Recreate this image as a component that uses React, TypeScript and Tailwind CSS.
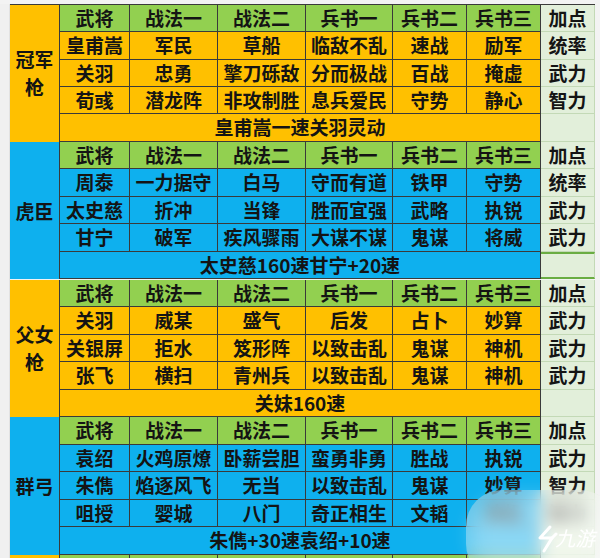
import React from 'react';

type Group = {
  label: string[];
  tone: 'gold' | 'blue';
  rows: string[][];
  summary: string;
  accentSummary?: boolean;
};

const headers = ['武将', '战法一', '战法二', '兵书一', '兵书二', '兵书三'];

const groups: Group[] = [
  {
    label: ['冠军', '枪'],
    tone: 'gold',
    rows: [
      ['皇甫嵩', '军民', '草船', '临敌不乱', '速战', '励军', '统率'],
      ['关羽', '忠勇', '擎刀砾敌', '分而极战', '百战', '掩虚', '武力'],
      ['荀彧', '潜龙阵', '非攻制胜', '息兵爱民', '守势', '静心', '智力'],
    ],
    summary: '皇甫嵩一速关羽灵动',
  },
  {
    label: ['虎臣'],
    tone: 'blue',
    rows: [
      ['周泰', '一力据守', '白马', '守而有道', '铁甲', '守势', '统率'],
      ['太史慈', '折冲', '当锋', '胜而宜强', '武略', '执锐', '武力'],
      ['甘宁', '破军', '疾风骤雨', '大谋不谋', '鬼谋', '将威', '武力'],
    ],
    summary: '太史慈160速甘宁+20速',
    accentSummary: true,
  },
  {
    label: ['父女', '枪'],
    tone: 'gold',
    rows: [
      ['关羽', '威某', '盛气', '后发', '占卜', '妙算', '武力'],
      ['关银屏', '拒水', '笈形阵', '以致击乱', '鬼谋', '神机', '武力'],
      ['张飞', '横扫', '青州兵', '以致击乱', '鬼谋', '神机', '武力'],
    ],
    summary: '关妹160速',
  },
  {
    label: ['群弓'],
    tone: 'blue',
    rows: [
      ['袁绍', '火鸡原燎', '卧薪尝胆', '蛮勇非勇', '胜战', '执锐', '武力'],
      ['朱儁', '焰逐风飞', '无当', '以致击乱', '鬼谋', '妙算', '智力'],
      ['咀授', '婴城', '八门', '奇正相生', '文韬', '神机', '智力'],
    ],
    summary: '朱儁+30速袁绍+10速',
  },
];

const cell = 'flex items-center justify-center whitespace-nowrap border-r border-b border-[#3a3a3a]';
const side = 'flex items-center justify-center whitespace-nowrap border-b border-r border-[#c3d9b6] bg-[#e2efda]';

function GroupBlock({ group, first }: { group: Group; first?: boolean }) {
  const bg = group.tone === 'gold' ? 'bg-[#ffc000]' : 'bg-[#0eb0ee]';
  return (
    <div
      className={`grid h-[137.75px] grid-cols-[50px_70px_88px_88px_87px_74px_74px_54px] grid-rows-5 ${
        first ? 'border-t border-[#3a3a3a]' : ''
      }`}
    >
      <div className={`row-span-5 flex flex-col items-center justify-center border-r border-[#3a3a3a] leading-[28px] ${bg}`}>
        {group.label.map((l) => (
          <span key={l}>{l}</span>
        ))}
      </div>

      {headers.map((h) => (
        <div key={h} className={`${cell} bg-[#92d050]`}>
          {h}
        </div>
      ))}
      <div className={side}>加点</div>

      {group.rows.map((row, i) => (
        <React.Fragment key={i}>
          {row.slice(0, 6).map((c, j) => (
            <div key={j} className={`${cell} ${bg}`}>
              {c}
            </div>
          ))}
          <div className={side}>{row[6]}</div>
        </React.Fragment>
      ))}

      <div className={`col-span-6 ${cell} ${bg}`}>{group.summary}</div>
      <div
        className={
          group.accentSummary
            ? 'border-y-2 border-r border-y-[#6aad43] border-r-[#c3d9b6] bg-[#e2efda]'
            : 'border-b border-r border-[#c3d9b6] bg-[#e2efda]'
        }
      />
    </div>
  );
}

export default function App() {
  return (
    <div className="relative h-[558px] w-[600px] overflow-hidden bg-[#f3f3f3] font-['Noto_Sans_CJK_SC','Noto_Sans',sans-serif] text-[19px] font-bold text-[#141414]">
      <div className="flex pt-[4px]">
        <div className="w-[10px] shrink-0 border-r border-[#e2e2e2] bg-[#f0f0f0]" />
        <div className="flex flex-col">
          {groups.map((g, i) => (
            <GroupBlock key={i} group={g} first={i === 0} />
          ))}
          <div className="grid h-[20px] grid-cols-[50px_70px_88px_88px_87px_74px_74px_54px]">
            <div className="border-r border-[#3a3a3a] bg-[#ffc000]" />
            {headers.map((h) => (
              <div key={h} className="border-r border-[#3a3a3a] bg-[#92d050]" />
            ))}
            <div className="bg-[#e2efda]" />
          </div>
        </div>
      </div>

      {/* watermark haze */}
      <div className="absolute left-[466px] top-[490px] h-[90px] w-[150px] rounded-[36px] bg-white/35 backdrop-blur-[8px]" />
      <div className="absolute left-[470px] top-[495px] h-[80px] w-[140px] rounded-full bg-white/25 blur-[10px]" />
      <svg
        className="absolute left-[536px] top-[524px]"
        width="22"
        height="30"
        viewBox="0 0 22 30"
        fill="none"
        stroke="white"
        strokeWidth="3"
        strokeLinecap="round"
        strokeLinejoin="round"
      >
        <path d="M14 3 L4 14 L16 14 L8 27" />
        <path d="M16 14 L20 10" />
      </svg>
      <span className="absolute left-[557px] top-[528px] -skew-x-12 text-[20px] font-normal leading-none text-white">
        九游
      </span>
    </div>
  );
}
